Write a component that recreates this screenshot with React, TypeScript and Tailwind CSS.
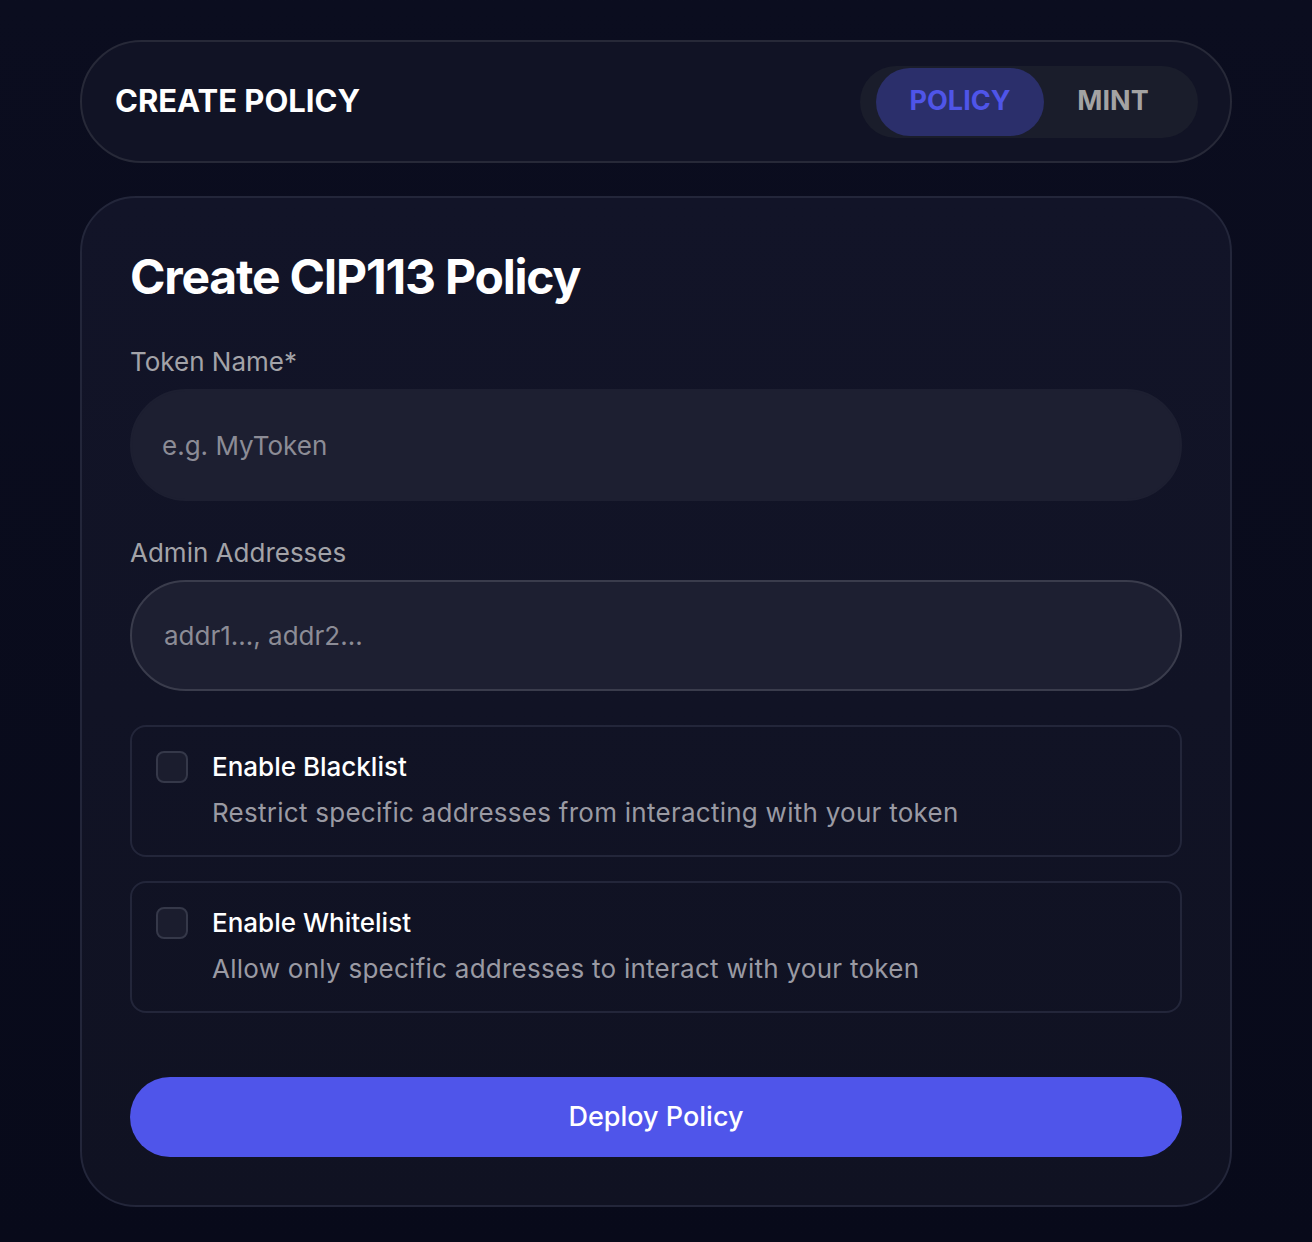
const font = { fontFamily: "Inter, 'Noto Sans', sans-serif" };

function OptionCard({ title, desc }: { title: string; desc: string }) {
  return (
    <label className="flex items-start gap-6 rounded-2xl border-2 border-[#23263a] px-6 pt-6 pb-[26px]">
      <span className="h-8 w-8 shrink-0 rounded-lg border-2 border-[#353849] bg-[#1b1d2e]" />
      <span className="flex flex-col gap-[14px]">
        <span className="text-[26px] leading-8 font-medium text-white">{title}</span>
        <span className="text-[26px] leading-8 tracking-[0.01em] text-[#9a9aa3]">{desc}</span>
      </span>
    </label>
  );
}

export default function App() {
  return (
    <div
      className="min-h-[1242px] bg-gradient-to-b from-[#0b0d1f] to-[#080a1a] px-20 pt-10 pb-9"
      style={font}
    >
      {/* Header */}
      <div className="flex h-[123px] items-center justify-between rounded-full border-2 border-[#272938] bg-[#111325] pl-[33px] pr-[32px]">
        <h1 className="text-[31px] font-bold text-white">CREATE POLICY</h1>
        <div className="flex h-[72px] items-center rounded-full bg-[#1a1d2b] pl-4 pr-[16px]">
          <button className="flex h-[68px] w-[168px] items-center justify-center rounded-full bg-[#2b2f6b] text-[27px] font-bold text-[#4f55e8]">
            POLICY
          </button>
          <button className="flex h-[68px] w-[138px] items-center justify-center text-[27px] font-bold text-[#a3a3a3]">
            MINT
          </button>
        </div>
      </div>

      {/* Form card */}
      <div className="mt-[33px] rounded-[56px] border-2 border-[#23263a] bg-gradient-to-b from-[#121428] to-[#101222] px-12 pt-[55px] pb-12">
        <h2 className="text-5xl leading-none font-bold tracking-tight text-white">Create CIP113 Policy</h2>

        <div className="mt-[41px] flex flex-col gap-2">
          <span className="text-[26px] text-[#a3a3a8]">Token Name*</span>
          <input
            placeholder="e.g. MyToken"
            className="h-[112px] rounded-full border-2 border-[#1d1f31] bg-[#1d1f31] px-[30px] text-[26px] text-white placeholder-[#8c8c96] outline-none"
          />
        </div>

        <div className="mt-8 flex flex-col gap-2">
          <span className="text-[26px] text-[#a3a3a8]">Admin Addresses</span>
          <input
            placeholder="addr1..., addr2..."
            className="h-[111px] rounded-full border-2 border-[#3a3c4c] bg-[#1d1f31] px-8 text-[26px] text-white placeholder-[#8c8c96] outline-none"
          />
        </div>

        <div className="mt-[34px] flex flex-col gap-6">
          <OptionCard title="Enable Blacklist" desc="Restrict specific addresses from interacting with your token" />
          <OptionCard title="Enable Whitelist" desc="Allow only specific addresses to interact with your token" />
        </div>

        <button className="mt-16 flex h-20 w-full items-center justify-center rounded-full bg-[#4f55ea] text-[27px] font-medium text-white">
          Deploy Policy
        </button>
      </div>
    </div>
  );
}
